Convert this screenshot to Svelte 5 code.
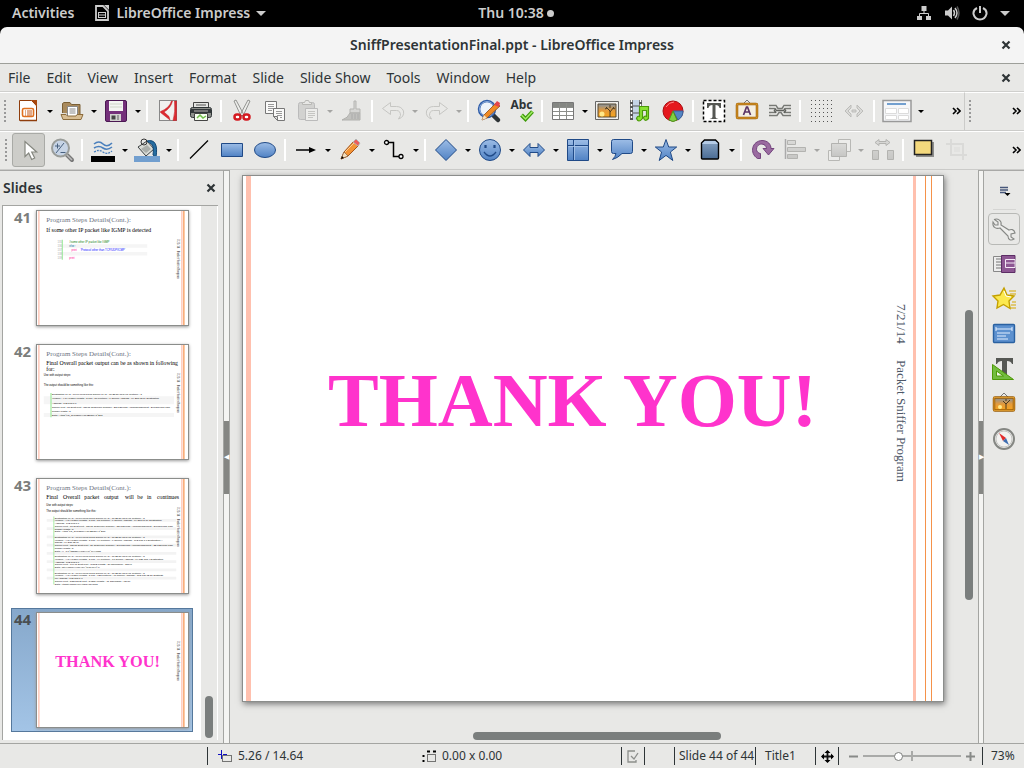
<script>
  const blue = 'fill="url(#blue)" stroke="#204a87"';
  const grey = 'fill="url(#silver)" stroke="#b3b3b0"';

  const art = {
    new: '<path d="M3.500 1.500h12l5 5v15h-17z" fill="#fff" stroke="#8f3d0c"/><path d="M15 1h6v7z" fill="#a8480f"/><rect x="6.500" y="9.500" width="11" height="8" rx="1.500" fill="#fff" stroke="#e07020" stroke-width="1.600"/><path d="M9 12h1m1 0h5M9 14h1m1 0h5M9 16h1m1 0h5" stroke="#c2571a"/><path d="M4 21.500h17" stroke="#8f3d0c" stroke-width="1.500"/>',
    open: '<path d="M2.500 14V4.500l1.500-1h6l1.500 2h8.500V15" fill="#a98a5c" stroke="#7a5f35"/><path d="M7.500 7.500h10v10h-10z" fill="#fff" stroke="#888"/><path d="M9.500 10h6m-6 2h6m-6 2h6" stroke="#888"/><path d="M1 15.500h5l1.500 1.500h8.500l1-1.500h6l-2 5H3z" fill="#d8bd92" stroke="#8c6c3c"/>',
    save: '<rect x="1.500" y="1.500" width="21" height="21" rx="1.500" fill="#74307a" stroke="#4a1852"/><path d="M5 2h14v10H5z" fill="#f4f5f2"/><path d="M6 5h12M6 8h12" stroke="#cfd6c8"/><path d="M6 15h11v7H6z" fill="#d2d2cf"/><path d="M7.500 16.500h4v4h-4z" fill="#444"/><path d="M13 16h2v5h-2z" fill="#999"/>',
    pdf: '<rect x="3.500" y="1.500" width="17" height="20" fill="#f1f1ef" stroke="#888"/><path d="M18.500 2h2v19.500h-3.500q2.500-8 1.500-19.500zM15.500 2q-2 7-11 10.500v1L14 21l-1-3.500L8 13q7-4 8.500-11z" fill="#dd2a30" stroke="#c01b21" stroke-width=".5"/>',
    print: '<path d="M4.500 3.500h15v6h-15z" fill="#e4e5e2" stroke="#444"/><path d="M7 6h10" stroke="#555"/><rect x="1.500" y="8.500" width="21" height="10" rx="2" fill="#8d8f8b" stroke="#2e3436"/><path d="M2 10h20v4H2z" fill="#33383a"/><path d="M5 11h14v2H5z" fill="#777"/><path d="M5.500 14.500h13v7h-13z" fill="#f8fff2" stroke="#444"/><path d="m8 19 3-3 3 3 3-2" fill="none" stroke="#71be4b" stroke-width="1.500"/>',
    cut: '<path d="m4 2 2-1 8 15-3 1zM20 2l-2-1-8 15 3 1z" fill="#ededeb" stroke="#7b7e7a" stroke-width=".8"/><rect x="4.500" y="15.500" width="6" height="5" rx="2.500" fill="#fff" stroke="#d41920" stroke-width="2.500"/><rect x="13.500" y="15.500" width="6" height="5" rx="2.500" fill="#fff" stroke="#d41920" stroke-width="2.500"/>',
    copy: '<path d="M2.500 2.500h11v12h-11z" fill="#fafaf9" stroke="#777"/><path d="M5 5.500h6m-6 2h6m-6 2h6m-6 2h4" stroke="#999"/><path d="M10.500 9.500h11v12h-7l-4-4z" fill="#fafaf9" stroke="#777"/><path d="M13 12.500h6m-6 2h6m-5 2h5m-2 2h2" stroke="#999"/><path d="M10.500 17.500h4v4z" fill="#ddd" stroke="#777"/>',
    paste: '<rect x="2.500" y="3.500" width="16" height="17" rx="2" fill="#d2d2d0" stroke="#bbb"/><path d="M6.500 5.500v-2h2l1-2h3l1 2h2v2z" fill="#e7e7e5" stroke="#b8b8b5"/><path d="M9.500 9.500h12v12h-12z" fill="#ededeb" stroke="#bbb"/><path d="M12 12.500h7m-7 2h7m-7 2h7m-7 2h5" stroke="#c5c5c2"/>',
    brush: '<path d="M14 2h2v8h4v4H10v-4h4z" fill="#d6d6d4" stroke="#b5b5b2"/><path d="M10 14h10v7H2q6-2 8-7z" fill="#c1c1be" stroke="#b0b0ad"/><path d="M12 15v5m3-5v5m3-5v5" stroke="#aaa"/>',
    undo: '<path d="M9.500 3.500 1.500 9.500l8 6v-4h6q4 0 4 5l-2 3.500q6-2 5-8-2-4.500-7-4.500h-6z" fill="#e9e9e7" stroke="#c6c6c3"/>',
    redo: '<path d="m14.500 3.500 8 6-8 6v-4h-6q-4 0-4 5l2 3.500q-6-2-5-8 2-4.500 7-4.500h6z" fill="#e9e9e7" stroke="#c6c6c3"/>',
    find: '<path d="m15 15 6 6" stroke="#2e3436" stroke-width="4.500" stroke-linecap="round"/><circle cx="10" cy="10" r="8" fill="#eef3fa" stroke="#2f5ca8" stroke-width="2.500"/><circle cx="10" cy="10" r="7.500" fill="none" stroke="#8caddc"/><path d="m5 21 2-5L19 4l4 3L10 19z" fill="#f08a24" stroke="#8a4a16" stroke-width=".8"/><path d="m17 6 3-4 3 2-1 4z" fill="#e5454b"/><path d="m5 21 2-5 3 3z" fill="#f4dfbf"/>',
    spell: '<path d="m11.500 16 4 4 7-7.500" fill="none" stroke="#3f9b0b" stroke-width="4"/><path d="m11.500 16 4 4 7-7.500" fill="none" stroke="#a3ec66" stroke-width="1.500"/>',
    table: '<path d="M1.500 3.500h21v17h-21z" fill="#fff" stroke="#777"/><path d="M2 4h20v4H2z" fill="#858783"/><path d="M2 8.500h20M2 12.500h20M2 16.500h20M8.500 4v16M15.500 4v16" stroke="#8c8e8a"/>',
    image: '<path d="M.5 2.500h23v18H.5z" fill="#eeeeec" stroke="#666"/><path d="M3 5h18v13H3z" fill="url(#sunset)" stroke="#5b4a30"/><circle cx="7" cy="15" r="2.500" fill="#ffe98a"/><path d="M15 18v-6l-4-4m4 5 4-5m-4 1V6m-3 3-2 1m8-1 2 1" fill="none" stroke="#4a3a20"/>',
    media: '<path d="M2 1h12v20H2z" fill="#c5d4e6"/><path d="M3.500 1v20m9-20v20" stroke="#555" stroke-width="3"/><path d="M3.500 1v20m9-20v20" stroke="#fff" stroke-width="1.500" stroke-dasharray="2 2"/><path d="M5 7h6m-6 7h6" stroke="#555"/><path d="M11.500 7.500h9v12q-4 4-5-1 1-2 3-1v-6h-4v8q-4 5-6 0 1-3 3-2z" fill="#8ae234" stroke="#4c9a0a" stroke-width="1.200"/>',
    chart: '<circle cx="12" cy="12" r="10" fill="#e5181d" stroke="#a90d11"/><path d="M12 12h10q0 6-5 9z" fill="#5586c4" stroke="#32629f"/><path d="m12 12 4 9q-4 3-8 0z" fill="#80ce43" stroke="#4e941f"/><path d="M5 8q3-5 8-5" fill="none" stroke="#ff8888"/>',
    textbox: '<path d="M1.500 1.500h21v21h-21z" fill="#fff" stroke="#000" stroke-width="1.500" stroke-dasharray="3 2"/><path d="M5 4h14v5h-1.500q-.5-3-4-3v12q0 1.500 3 2H7.500q3-.5 3-2V6q-3.500 0-4 3H5z" fill="#555753"/>',
    fontwork: '<path d="m8 5 4-4 4 4" fill="none" stroke="#777"/><rect x="2" y="5" width="20" height="14" rx="1" fill="#f4eee2" stroke="#9a5c05" stroke-width="2.500"/><rect x="2" y="5" width="20" height="14" fill="none" stroke="#eaa838" stroke-width=".9"/><path d="m8.500 16 3-8h1l3 8m-6-3h5" fill="none" stroke="#5c3566" stroke-width="1.700"/>',
    link: '<path d="M1 6.500h7l2 3h4l2-3h7M1 16.500h8l2-3h2l2 3h8M1 9.500h6M17 9.500h6M1 13.500h6M17 13.500h6" fill="none" stroke="#777975" stroke-width="1.400"/><path d="M8 9.500 6.500 11.500 8 14m8-4.500 1.500 2L16 14M8 11.500h8" fill="none" stroke="#60625e" stroke-width="1.600"/><path d="M3 8h5m8 0h5M3 15h5m8 0h5" stroke="#dededb"/>',
    grid: '<path d="M2 1.500h21M2 5.500h21M2 9.500h21M2 13.500h21M2 17.500h21M2 22.500h21" stroke="#555" stroke-dasharray="1 3"/>',
    glue: '<path d="m9 6-6 6 6 6v-3l-3-3 3-3zM15 6l6 6-6 6v-3l3-3-3-3zM10 11h4v2h-4z" fill="#d9d9d7" stroke="#bcbcb9"/>',
    lines: '<path d="M3 6q5-4 9 0t9-1M3 10q5-3 9 0t9-1" fill="none" stroke="#4b80bd" stroke-width="1.600"/><path d="M3 14q5-3 9 0t9-1" fill="none" stroke="#4b80bd" stroke-width="1.300" stroke-dasharray="2 1"/><path d="M0 18h24v6H0z"/>',
    fill: '<path d="M3 9 12 3l7 8-8 7z" fill="#d9dbd6" stroke="#3c4143"/><path d="m6 11 6-4 4 4-5 4z" fill="#aaaeaa"/><path d="M12 3c8-2 11 4 9 16l-3-2c1-8 0-11-5-13z" fill="#266da1" stroke="#124674"/><circle cx="9" cy="4" r="3" fill="none" stroke="#333"/><path d="M-1 18h26v6H-1z" fill="#729fcf"/>',
    pointer: '<path d="M8 3.500v15l3.700-3.500 3 6.500 3-1.500-3-6h5z" fill="#fff" stroke="#85877f" stroke-width="1.200"/>',
    zoom: '<path d="m17 17 5 5" stroke="#777" stroke-width="4" stroke-linecap="round"/><path d="m16 16 6 6" stroke="#bbb" stroke-width="1.500"/><circle cx="10.500" cy="10" r="8.500" fill="#c7d4e5" stroke="#9a9d9a" stroke-width="2"/><path d="M5 8h5M7.500 5.500v5m3 4h5M14 5l-8 10" stroke="#48617f" stroke-width="1"/>',
    line: '<path d="M3 20.500 21 2.500" stroke="#000" stroke-width="1.300"/>',
    rect: `<path d="M1.500 5.500h21v13h-21z" ${blue}/>`,
    ellipse: `<ellipse cx="12" cy="12" rx="10.500" ry="7.500" ${blue}/>`,
    arrow: '<path d="M2 12h14" stroke="#000" stroke-width="1.500"/><path d="m15 9 7 3-7 3z"/>',
    pencil: '<path d="m3 21 3-7L16 3l5 4L10 18z" fill="#f39336" stroke="#a3541a"/><path d="M7 14 17 4" stroke="#ffd094"/><path d="m15 4 3-3 4 4-2 3z" fill="#ed5b5b" stroke="#b5b5b5"/><path d="m3 21 3-7 4 4z" fill="#f4dfbf" stroke="#7a5330" stroke-width=".6"/><path d="m3 21 1-3 2 2z"/>',
    connector: '<path d="M6 4.500h5.500v14H17" fill="none" stroke="#000" stroke-width="1.500"/><circle cx="4.500" cy="4.500" r="2" fill="#fff" stroke="#000" stroke-width="1.300"/><circle cx="19" cy="18.500" r="2" fill="#fff" stroke="#000" stroke-width="1.300"/>',
    diamond: `<path d="m12 1.500 10.500 10.500L12 22.500 1.500 12z" ${blue}/>`,
    smile: `<circle cx="12" cy="12" r="10.500" ${blue}/><path d="M7.500 7v3M16.500 7v3" stroke="#204a87" stroke-width="2.200"/><path d="M6 14q6 8 12 0" fill="none" stroke="#204a87" stroke-width="1.300"/>`,
    arrows: `<path d="M1.500 12 8 5.500v4h8v-4l6.500 6.500-6.500 6.500v-4H8v4z" ${blue}/>`,
    flow: `<path d="M1.500 1.500h21v21h-21z" ${blue}/><path d="M7.500 2v20M2 7.500h20" stroke="#204a87"/><path d="M8.500 3v19M2.500 8.500h19" stroke="#a9c7eb" stroke-width=".8"/>`,
    callout: `<path d="M3.500 1.500h17q2 0 2 2v10q0 2-2 2H12Q8 20 2.500 21.500q3-3 3.500-6H3.500q-2 0-2-2v-10q0-2 2-2z" ${blue}/>`,
    star: `<path d="m12 1.500 2.700 7.500h8L16.400 14l2.400 8.500L12 17.400 5.200 22.500 7.600 14 1.300 9h8z" ${blue}/>`,
    cube: '<path d="m3.500 5 3-3h11l3 3v15q0 1-1 1h-15q-1 0-1-1z" fill="url(#steel)" stroke="#000" stroke-width="1.400"/><path d="m4.500 5 2.500-2h10l2.500 2v1h-15z" fill="#b4cbe5"/>',
    rotate: '<path d="M7.500 20.500C-1 15 2 3 12 2.500c6 0 9 4 9 8h3L18.500 17 13 10.500h3.500c-.5-6-10-6-10 1 0 2 2 4 4 4v5z" fill="#9a6ba0" stroke="#6b3a76" stroke-width=".9"/>',
    align: `<path d="M2.500 1v20" stroke="#aaa" stroke-width="1.500"/><path d="M4.500 2.500h8v4h-8zM4.500 9.500h18v4h-18zM4.500 16.500h10v4h-10z" ${grey}/>`,
    arrange: `<path d="M11.500 1.500h12v12h-12zM1.500 12.500h11v10h-11z" fill="#ececea" stroke="#b8b8b5"/><path d="M4.500 5.500h15v13h-15z" ${grey}/>`,
    spread: `<path d="m4 4.500 4-3v2h7v-2l4 3-4 3v-2H8v2zM1.500 12.500h6v9h-6zM16.500 12.500h6v9h-6z" ${grey}/>`,
    shadow: '<path d="M4 4h18v15H4z" fill="#8e8e8b"/><path d="M2.500 2.500h17v14h-17z" fill="#f4d97d" stroke="#222" stroke-width="1.500"/>',
    crop: '<path d="M6 1v16h16M1 6h17v16" fill="none" stroke="#dadad8" stroke-width="2"/><path d="M9 9h6v5H9z" fill="#e2e2e0"/>',
    menu: '<path d="M8 8.500h8M8 11h8M8 13.500h6" stroke="#48587b" stroke-width="1.400"/><path d="M12.500 14h6l-3 3z"/>',
    wrench: '<path d="M2.500 2.500 6 5v3H3L1 5c-1 6 4 7 7 6l8 8c0 4 3 5 6 3l-3-2v-3l4-1c-1-4-4-4-6-3L9 8c1-4-3-7-7-5.500z" fill="#eeeeec" stroke="#868885" stroke-width="1.100"/>',
    transition: '<path d="M1.500 4.500h9v15h-9z" fill="#eee" stroke="#888"/><path d="M4 7h5m-5 3h5m-5 3h5m-5 3h5" stroke="#777"/><path d="M9.500 3.500H23v17H9.500z" fill="#8d5793" stroke="#5c2d65"/><path d="M13.500 7.500H23v8h-9.500zM14 11h9" fill="none" stroke="#f4e8f6"/>',
    effects: '<path d="M17 4h7m-6 3h6m-4 8h4m-5 3h5m-6 3h6" stroke="#d5a800"/><path d="m12 1 3 7 7 1-5 5 1 7.500-6.500-4L5 21l1-7-5-5 7-1z" fill="#fce94f" stroke="#c4a000" stroke-width="1.400"/><path d="m12 4 2 5 5 1" fill="none" stroke="#fff"/>',
    master: '<rect x="1.500" y="2.500" width="21" height="18" rx="1" fill="#5d91cf" stroke="#2a61a1" stroke-width="1.400"/><path d="M4 7h16M4 5v4m16-4v4M5 11h13M5 14h9m-9 3h11" stroke="#e4efff"/>',
    styles: '<path d="M4 1h17v6h-1q-1-3-5-3v13h-5V4Q6 4 5 7H4z" fill="#555753"/><path d="M.5 7.500v15h21z" fill="#73bd3f" stroke="#4e9a06"/><path d="M4.500 14v5h7z" fill="#edf7e5" stroke="#4e9a06"/>',
    gallery: '<path d="m8 5 4-4 4 4" fill="none" stroke="#777"/><rect x="2" y="5.500" width="20" height="13" rx="1" fill="url(#sunset)" stroke="#9a5c05" stroke-width="2.500"/><rect x="2" y="5.500" width="20" height="13" fill="none" stroke="#e5a437" stroke-width=".8"/><path d="M14 17v-5l-3-3m3 3 4-4m-4 1V7" fill="none" stroke="#4a3a20"/><circle cx="8" cy="15" r="2" fill="#ffe98a"/>',
    compass: '<circle cx="12" cy="12" r="10" fill="#f2f2f0" stroke="#858783" stroke-width="2"/><circle cx="12" cy="12" r="8" fill="none" stroke="#c5c5c2"/><path d="m7 6 7 5-3 3z" fill="#e32b2b"/><path d="m17 18-3-7-3 3z" fill="#3e6eb0"/>'
  };

  const b = (icon, label, drop = false, off = false) => ({ icon, label, drop, off });
  const groups1 = [
    [b('new', 'New', true), b('open', 'Open', true), b('save', 'Save', true)],
    [b('pdf', 'Export as PDF'), b('print', 'Print')],
    [b('cut', 'Cut'), b('copy', 'Copy'), b('paste', 'Paste', true, true), b('brush', 'Clone Formatting', false, true)],
    [b('undo', 'Undo', true, true), b('redo', 'Redo', true, true)],
    [b('find', 'Find & Replace'), b('spell', 'Spelling')],
    [b('table', 'Table', true), b('image', 'Image'), b('media', 'Audio or Video'), b('chart', 'Chart')],
    [b('textbox', 'Text Box'), b('fontwork', 'Fontwork'), b('link', 'Hyperlink')],
    [b('grid', 'Display Grid'), b('glue', 'Helplines', false, true)],
    [b('layout', 'Slide Layout', true)]
  ];
  const groups2 = [
    [b('pointer', 'Select'), b('zoom', 'Zoom & Pan')],
    [b('lines', 'Line Color', true), b('fill', 'Fill Color', true)],
    [b('line', 'Line'), b('rect', 'Rectangle'), b('ellipse', 'Ellipse')],
    [b('arrow', 'Lines and Arrows', true), b('pencil', 'Curve', true), b('connector', 'Connector', true)],
    [b('diamond', 'Basic Shapes', true), b('smile', 'Symbol Shapes', true), b('arrows', 'Block Arrows', true), b('flow', 'Flowchart', true), b('callout', 'Callouts', true), b('star', 'Stars', true), b('cube', '3D Objects', true)],
    [b('rotate', 'Rotate'), b('align', 'Align', true, true), b('arrange', 'Arrange', true, true), b('spread', 'Distribute', false, true)],
    [b('shadow', 'Shadow'), b('crop', 'Crop', false, true)]
  ];
  const deck = [b('wrench', 'Properties'), b('transition', 'Slide Transition'), b('effects', 'Custom Animation'), b('master', 'Master Pages'), b('styles', 'Styles'), b('gallery', 'Gallery'), b('compass', 'Navigator')];
  const menus = ['File', 'Edit', 'View', 'Insert', 'Format', 'Slide', 'Slide Show', 'Tools', 'Window', 'Help'];

  const code42 = [
    'Destination MAC : 00:1c:c0:f3:73:aa Source MAC : 00:25:5e:1a:34:f1 Protocol : 8',
    'Version : 4 IP Header Length : 5 TTL : 57 Protocol : 6 Source Address : 64.233.72.19 Destination',
    'Address : 192.168.1.6',
    'Source Port : 80 Dest Port : 38918 Sequence Number : 2241219087 Acknowledgement : 2916819311 TCP',
    'header length : 8',
    'Data : YtjTh^eC_gHUghUHYRHB5G7Y7^E17'
  ];
  const block = (a, c, d, e) => [
    'Destination MAC : 00:1c:c0:f3:73:aa Source MAC : 00:25:5e:1a:34:f1 Protocol : 8', a, c, d, ...e
  ];
  const code43 = [
    ...block('Version : 4 IP Header Length : 5 TTL : 57 Protocol : 6 Source Address : 64.233.70.19 Destination', 'Address : 192.168.1.6', 'Source Port : 80 Dest Port : 38918 Sequence Number : 2241219087 Acknowledgement : 2916819311 TCP', ['header length : 8', 'Data : YtjTh^eC_gHUghUHYRHB5G7Y7^E17', '']),
    ...block('Version : 4 IP Header Length : 5 TTL : 64 Protocol : 6 Source Address : 192.168.1.6 Destination A', 'ddress : 64.233.72.19', 'Source Port : 38918 Dest Port : 80 Sequence Number : 2916819311 Acknowledgement : 2241219087 TCP', ['header length : 5', 'Data : H~TYt^tjghggHYUGHYU^THYUhG', '']),
    ...block('Version : 4 IP Header Length : 5 TTL : 64 Protocol : 17 Source Address : 74.125.175.4 Destination', ' Address : 192.168.1.6', 'Source Port : 34948 Dest Port : 34502 Length : 20 Checksum : 12746', ['Data : gtHYUbcTHYuUYTH^TygHUYt^%', '']),
    ...block('Version : 4 IP Header Length : 5 TTL : 128 Protocol : 17 Source Address : 172.168.12.51 Destinati', 'on Address : 192.168.1.6', 'Source Port : 5353 Dest Port : 54287 Length : 45 Checksum : 12479', ['Data : xtGhtYUhGTYUvYtGhYTgYhUg'])
  ];
  const spread43 = [[37, 'Final'], [104, 'Overall'], [189, 'packet'], [268, 'output'], [352, 'will'], [401, 'be'], [440, 'in'], [480, 'continues']];
  const slides = [41, 42, 43, 44];
  let current = $state(44);
  let zoom = $state(35);
</script>

{#snippet icon(name)}
  {#if name === 'layout'}
    <svg width="30" height="24" viewBox="0 0 30 24" aria-hidden="true">
      <path d="M1 1.500h28v21H1z" fill="#f5f6f8" stroke="#999" stroke-width="1.500" />
      <path d="M5 5h19" stroke="#729fcf" stroke-width="2" />
      <path d="M3.500 9.500h11v5h-11zM16.500 9.500h10v5h-10zM3.500 16.500h11v4h-11zM16.500 16.500h10v4h-10z" fill="#fff" stroke="#dcdcdc" />
    </svg>
  {:else}
    <svg width="24" height="24" viewBox="0 0 24 24" overflow="visible" aria-hidden="true">{@html art[name]}</svg>
  {/if}
{/snippet}

{#snippet toolgroups(groups)}
  {#each groups as group, i}
    {#if i > 0}<span class="sep"></span>{/if}
    {#each group as t}
      <button class="tool" class:pressed={t.icon === 'pointer'} class:broad={t.icon === 'layout'} aria-label={t.label} disabled={t.off}>
        {#if t.icon === 'spell'}<span class="abc">Abc</span>{/if}
        {@render icon(t.icon)}
      </button>
      {#if t.drop}<button class="drop" aria-label="{t.label} options" disabled={t.off}></button>{/if}
    {/each}
  {/each}
{/snippet}

{#snippet cross()}
  <svg width="10" height="10" viewBox="0 0 10 10" aria-hidden="true"><path d="m1.500 1.500 7 7m0-7-7 7" stroke="#2e3436" stroke-width="2.200" /></svg>
{/snippet}

{#snippet more(label)}
  <button class="more" aria-label={label}><svg width="9" height="8" viewBox="0 0 9 8" aria-hidden="true"><path d="m1 1 3 3-3 3m4-6 3 3-3 3" fill="none" stroke="#000" stroke-width="1.600" /></svg></button>
{/snippet}

{#snippet mini(n)}
  <svg class="mini" viewBox="0 0 604 456" aria-hidden="true">
    <path d="M5 0h5v456H5zM577 0h5v456h-5z" fill="#ffc0ae" />
    <path d="M585 0h5v456h-5z" fill="#f79550" />
    <g transform="translate(559 0) rotate(90)" font-size="12" fill="#222"><text x="112" y="0">7/21/14</text><text x="159" y="0">Packet Sniffer Program</text></g>
    {#if n < 44}<text x="37" y="45" font-size="28" fill="#6b7280">Program Steps Details(Cont.):</text>{/if}
    {#if n === 41}
      <text x="37" y="83" font-size="23">If some other IP packet like IGMP is detected</text>
      <path d="M101 133h340v14H101zM101 164h340v14H101z" fill="#f5f5f5" />
      <path d="M99 115h4v80h-4z" fill="#8ee88e" />
      <g font-size="11" class="sans">
        {#each [135, 136, 137, 138, 139] as k, i}<text x="82" y={128 + i * 16} fill="#aaa">{k}</text>{/each}
        <text x="129" y="128" fill="#108010">#some other IP packet like IGMP</text>
        <text x="129" y="144" fill="#006699">else :</text>
        <text x="138" y="160" fill="#ff1493">print</text>
        <text x="174" y="160" fill="#1010ff">'Protocol other than TCP/UDP/ICMP'</text>
        <text x="129" y="192" fill="#ff1493">print</text>
      </g>
    {:else if n === 42}
      <text x="37" y="80" font-size="23">Final Overall packet output can be as shown in following</text>
      <text x="37" y="104" font-size="23">for:</text>
      <g class="sans" font-size="11"><text x="27" y="124">Use with output steps:</text><text x="27" y="163">The output should be something like this:</text></g>
      <path d="M27 205h521v32H27zM27 272h521v16H27z" fill="#f5f5f5" />
      <path d="M54 192h4v97h-4z" fill="#8ee88e" />
      <g font-size="10" class="sans">{#each code42 as l, i}<text x="60" y={200 + i * 17}>{l}</text>{/each}</g>
    {:else if n === 43}
      {#each spread43 as [x, w]}<text {x} y="80" font-size="23">{w}</text>{/each}
      <g class="sans" font-size="11"><text x="37" y="107">Use with output steps:</text><text x="37" y="133">The output should be something like this:</text></g>
      {#each code43 as l, i}
        {#if i % 3 === 1}<path d="M39 {149 + i * 11}h518v11H39z" fill="#f3f3f3" />{/if}
      {/each}
      <path d="M66 150h3v272h-3z" fill="#8ee88e" />
      <g font-size="10" class="sans">{#each code43 as l, i}<text x="71" y={158 + i * 11}>{l}</text>{/each}</g>
    {:else if n === 44}
      <text x="73" y="215" font-size="65" font-weight="700" fill="#ff33cc">THANK YOU!</text>
    {/if}
  </svg>
{/snippet}

<svg class="defs" width="0" height="0" aria-hidden="true">
  <defs>
    <linearGradient id="blue" x2="0" y2="1"><stop stop-color="#9dbde6" /><stop offset="1" stop-color="#5082c4" /></linearGradient>
    <linearGradient id="steel" x2="0" y2="1"><stop stop-color="#8aa5c4" /><stop offset="1" stop-color="#4a6c94" /></linearGradient>
    <linearGradient id="silver" x2="0" y2="1"><stop stop-color="#dadad8" /><stop offset="1" stop-color="#c6c6c4" /></linearGradient>
    <linearGradient id="sunset" x2="0" y2="1"><stop stop-color="#8291a1" /><stop offset=".5" stop-color="#e49a3a" /><stop offset="1" stop-color="#f7a51c" /></linearGradient>
  </defs>
</svg>

<div class="screen">
  <header class="topbar">
    <div class="left">
      <button class="shell">Activities</button>
      <button class="shell app">
        <svg width="16" height="18" viewBox="0 0 16 18" aria-hidden="true"><path d="M2 2h7l5 5v9H2z" fill="none" stroke="#ccc" stroke-width="1.800" /><path d="M10 1h5v5z" fill="#ccc" /><rect x="4.500" y="8.500" width="7" height="5" fill="none" stroke="#ccc" /><path d="M5 11h6" stroke="#ccc" /></svg>
        LibreOffice Impress <i class="caret"></i>
      </button>
    </div>
    <button class="shell clock">Thu 10:38<i class="dot"></i></button>
    <div class="tray">
      <svg width="16" height="16" viewBox="0 0 16 16" aria-hidden="true"><path d="M5.500 1h5v5h-5zM1 11h5v4H1zM10 11h5v4h-5z" fill="#ccc" /><path d="M8 5v4M3.500 11V8.500h9V11" fill="none" stroke="#ccc" /></svg>
      <svg width="16" height="16" viewBox="0 0 16 16" aria-hidden="true"><path d="M1 5.500h3l4-4v13l-4-4H1z" fill="#ccc" /><path d="M9.500 5q2 3 0 6M11 3q4 5 0 10" fill="none" stroke="#ccc" stroke-width="1.500" /><path d="M13 1.500q4 6.500 0 13" fill="none" stroke="#555" stroke-width="1.500" /></svg>
      <svg width="16" height="16" viewBox="0 0 16 16" aria-hidden="true"><path d="M8 1v7M5 3q-4 2-3.500 6Q3 14.500 8 14.500T14.500 9Q15 5 11 3" fill="none" stroke="#ccc" stroke-width="2" /></svg>
      <i class="caret"></i>
    </div>
  </header>

  <div class="titlebar"><h1>SniffPresentationFinal.ppt - LibreOffice Impress</h1><button class="close" aria-label="Close window">{@render cross()}</button></div>

  <nav class="menubar">
    {#each menus as m}<button>{m}</button>{/each}
    <button class="close" aria-label="Close document">{@render cross()}</button>
  </nav>

  <div class="bars">
    <div class="toolbar"><span class="grip"></span>{@render toolgroups(groups1)}{@render more('More controls')}</div>
    <div class="toolbar stub"><span class="grip"></span>{@render more('More presentation controls')}</div>
  </div>
  <div class="toolbar second"><span class="grip"></span>{@render toolgroups(groups2)}{@render more('More drawing controls')}</div>

  <main>
    <aside class="slides">
      <div class="head"><h2>Slides</h2><button class="close" aria-label="Close slide pane">{@render cross()}</button></div>
      <div class="frame">
        <div class="list">
          {#each slides as n}
            <button class="item" class:active={n === current} onclick={() => (current = n)}><span>{n}</span>{@render mini(n)}</button>
          {/each}
        </div>
        <div class="track side"><i></i></div>
      </div>
    </aside>
    <div class="split"><button aria-label="Hide slide pane">◀</button></div>

    <section class="editor">
      <article class="slide">
        <i class="band first"></i>
        <h3>THANK YOU!</h3>
        <p><span>7/21/14</span><span>Packet Sniffer Program</span></p>
        <i class="band last"></i><i class="thin"></i><i class="thin"></i>
      </article>
      <div class="track vert"><i></i></div>
      <div class="track horiz"><i></i></div>
    </section>

    <div class="split"><button aria-label="Hide sidebar">▶</button></div>
    <aside class="deck">
      <button class="cfg" aria-label="Sidebar settings">{@render icon('menu')}</button>
      {#each deck as d, i}<button class:on={i === 0} aria-label={d.label}>{@render icon(d.icon)}</button>{/each}
    </aside>
  </main>

  <footer>
    <span></span>
    <div class="pos">
      <span><svg width="15" height="13" viewBox="0 0 15 13" aria-hidden="true"><path d="M3.500 0v9M0 4.500h9" stroke="#1010c0" stroke-dasharray="4 1" /><path d="M4.500 5.500h9v6h-9z" fill="none" stroke="#000" stroke-dasharray="1 1" /></svg>5.26 / 14.64</span>
      <span><svg width="15" height="13" viewBox="0 0 15 13" aria-hidden="true"><path d="M5.500 4.500h8v7h-8z" fill="none" stroke="#000" stroke-dasharray="1 1" /><path d="M5 1.500h3m3 0h3M1.500 5v2m0 3v2" stroke="#000" stroke-width="2" /></svg>0.00 x 0.00</span>
    </div>
    <span class="cell mid"><svg width="12" height="13" viewBox="0 0 12 13" aria-hidden="true"><path d="M8 1H1v11h8v-2M4 6l3 3 4-6" fill="none" stroke="#8c8e8b" stroke-width="1.300" /></svg></span>
    <span class="cell"></span>
    <span class="cell">Slide 44 of 44</span>
    <span class="cell wide-pad">Title1</span>
    <span class="cell mid"><svg width="13" height="13" viewBox="0 0 13 13" aria-hidden="true"><path d="M6.500 1v11M1 6.500h11" stroke="#111" stroke-width="1.800" /><path d="m6.500 0 3 3h-6zM6.500 13l3-3h-6zM0 6.500l3-3v6zM13 6.500l-3-3v6z" /></svg></span>
    <div class="cell zoomer">
      <button aria-label="Zoom out"><svg width="9" height="9" viewBox="0 0 9 9" aria-hidden="true"><path d="M0 4.500h9" stroke="#888a88" stroke-width="2" /></svg></button>
      <input type="range" min="0" max="100" bind:value={zoom} aria-label="Zoom" />
      <button aria-label="Zoom in"><svg width="9" height="9" viewBox="0 0 9 9" aria-hidden="true"><path d="M0 4.500h9M4.500 0v9" stroke="#888a88" stroke-width="2" /></svg></button>
    </div>
    <span class="cell pct">73%</span>
  </footer>
</div>

<style>
  :global(body) { margin: 0; background: #000; }
  * { box-sizing: border-box; }
  button { border: 0; padding: 0; margin: 0; background: none; color: inherit; font: inherit; display: flex; align-items: center; justify-content: center; }
  h1, h2, h3, p { margin: 0; }
  svg { display: block; flex: none; }
  .defs { position: absolute; }
  .screen { display: flex; flex-direction: column; min-height: 100vh; font: 14px/20px "Noto Sans", "Open Sans", sans-serif; color: #2e3436; background: #000; }

  .topbar { display: grid; grid-template-columns: 1fr auto 1fr; align-items: center; height: 27px; padding: 0 14px 1px 12px; background: #000; color: #ccc; font-weight: 600; }
  .left, .app, .tray { display: flex; align-items: center; }
  .left { gap: 20px; }
  .app { gap: 6px; }
  .clock { gap: 3px; padding-left: 10px; }
  .tray { justify-content: flex-end; gap: 12px; }
  .caret { width: 0; border: 5px solid transparent; border-top-color: #ccc; border-bottom: 0; }
  .dot { width: 7px; height: 7px; border-radius: 50%; background: #ccc; }

  .titlebar { display: flex; align-items: center; height: 37px; padding: 0 13px 1px 23px; background: #f4f4f4; border-bottom: 1px solid #9d9f9a; border-radius: 7px 7px 0 0; }
  h1 { flex: 1; text-align: center; font-size: 14px; font-weight: 600; line-height: 20px; }
  .close { width: 10px; height: 10px; }
  .menubar { display: flex; align-items: center; gap: 16px; height: 28px; padding: 0 13px 0 8px; background: #e8e8e6; border-bottom: 1px solid #cfcfcd; }
  .menubar .close { margin-left: auto; }

  .bars { display: flex; }
  .toolbar { display: flex; align-items: center; flex: 1; height: 39px; padding: 0 3px 1px 4px; background: #e8e8e6; border-top: 1px solid #fff; border-bottom: 1px solid #cbcbc9; }
  .second { flex: none; padding-left: 5px; }
  .stub { flex: none; width: 60px; border-left: 1px solid #cbcbc9; }
  .grip { width: 2px; height: 22px; margin-right: 5px; background: repeating-linear-gradient(#999 0 2px, transparent 2px 4px); }
  .sep { width: 2px; height: 22px; margin: 0 3px; background: #fff; }
  .tool { position: relative; width: 33px; height: 34px; }
  .broad { width: 37px; }
  .pressed { border: 1px solid #a9aaa6; border-radius: 3px; background: #cdcdc9; }
  .abc { position: absolute; top: 3px; left: 0; width: 100%; text-align: center; font-size: 12px; line-height: 16px; font-weight: 700; }
  .drop { width: 11px; height: 34px; }
  .drop::after { content: ""; border: 3px solid transparent; border-top-color: #000; border-bottom: 0; }
  .drop:disabled::after { border-top-color: #a5a5a3; }
  .more { margin-left: auto; }

  main { display: grid; grid-template-columns: 223px 7px minmax(0, 1fr) 6px 40px; flex: 1; background: #e8e8e6; border-bottom: 1px solid #a4a5a2; }
  .slides { display: flex; flex-direction: column; border-top: 1px solid #a9a9a7; padding-bottom: 3px; }
  .head { display: flex; align-items: center; justify-content: space-between; height: 34px; padding: 0 7px 0 3px; }
  h2 { font-size: 14px; font-weight: 600; line-height: 20px; }
  .frame { display: flex; flex: 1; margin: 0 5px 0 2px; border: 1px solid #a4a5a2; border-width: 1px 0 0 1px; }
  .list { display: flex; flex: 1; flex-direction: column; gap: 10px; padding: 2px 8px 0; background: #fff; }
  .item { align-items: flex-start; justify-content: space-between; height: 124px; padding: 4px 4px 0 3px; color: #7b7d7b; font-size: 15px; font-weight: 700; line-height: 14px; }
  .active { padding: 3px 3px 0 2px; background: linear-gradient(#86a8cb, #a3c4e6); border: 1px solid #55789c; color: #4a4f52; }
  .mini { width: 153px; height: 116px; margin-top: -2px; background: #fff; border: 1px solid #8b8d8b; box-shadow: 0 1px 3px #999; font-family: "Liberation Serif", serif; font-weight: 400; }
  .mini .sans { font-family: "Liberation Sans", sans-serif; }
  .track { display: flex; }
  .track i { border-radius: 4px; background: #7a7e7d; }
  .side { flex-direction: column; justify-content: flex-end; width: 17px; padding: 0 5px 2px 4px; border-right: 1px solid #fff; }
  .side i { width: 8px; height: 42px; }
  .list { padding-top: 1px; }
  .mini { margin-top: 0; }
  .frame .list { padding-top: 0; }

  .split { display: flex; align-items: center; border: 1px solid #a4a5a2; border-width: 1px 1px 0 1px; background: #f4f4f2; }
  .split button { width: 100%; height: 73px; background: #858683; color: #fff; font-size: 7px; line-height: 8px; }

  .editor { display: grid; grid-template-columns: minmax(0, 1fr) 8px; grid-template-rows: auto 8px; align-content: space-between; column-gap: 21px; padding: 5px 5px 3px 12px; }
  .slide { display: flex; aspect-ratio: 4 / 3; padding: 0 11px 0 3px; background: #fff; border: 1px solid #8b8d8b; box-shadow: 1px 2px 6px #777; }
  .band { width: 5px; background: #ffc0ae; }
  .last { width: 3px; margin: 0 9px 0 5px; }
  .thin { width: 1px; margin-right: 5px; background: #f5924a; }
  .thin:last-child { margin-right: 0; }
  h3 { display: grid; flex: 1; place-items: center; padding-bottom: 76px; font: 700 76px/76px "Liberation Serif", serif; color: #ff33cc; white-space: nowrap; }
  .slide p { display: flex; gap: 16px; width: 14px; padding-top: 128px; writing-mode: vertical-rl; font: 13px/14px "Liberation Serif", serif; color: #4d5666; white-space: nowrap; }
  .vert { flex-direction: column; padding: 135px 0 102px; }
  .vert i { flex: 1; }
  .horiz { grid-column: 1 / -1; padding: 0 252px 0 231px; }
  .horiz i { flex: 1; }

  .deck { display: flex; flex-direction: column; align-items: center; gap: 3px; padding: 5px 0 0; border-top: 1px solid #a9a9a7; }
  .deck button { width: 32px; height: 32px; border-radius: 4px; }
  .deck .cfg { height: 34px; border-bottom: 1px solid #d5d5d3; border-radius: 0; width: 23px; padding-bottom: 4px; }
  .deck .on { border: 1px solid #b8b9b6; }

  footer { display: grid; grid-template-columns: 207px minmax(0, 1fr) 23px 30px 81px 60px 23px 144px 42px; align-items: center; height: 24px; background: #e8e8e6; font-size: 12px; line-height: 18px; white-space: nowrap; }
  .pos { display: grid; grid-template-columns: 204px 1fr; border-left: 1px solid #2e3436; padding-left: 10px; }
  .pos span { display: flex; align-items: center; gap: 5px; }
  .cell { height: 18px; padding-left: 4px; border-left: 1px solid #2e3436; }
  .wide-pad { padding-left: 9px; }
  .pct { padding-left: 8px; }
  .mid { display: flex; align-items: center; justify-content: center; padding: 0; }
  .zoomer { display: flex; align-items: center; gap: 5px; padding: 0 7px 0 10px; }
  input { appearance: none; flex: 1; min-width: 0; height: 14px; margin: 0; background: linear-gradient(90deg, transparent 48px, #a9aaa8 48px 50px, transparent 50px) 0 2px / 100% 10px no-repeat, linear-gradient(#a9aaa8, #a9aaa8) 0 6px / 100% 2px no-repeat; }
  input::-webkit-slider-thumb { appearance: none; width: 9px; height: 9px; border: 1px solid #7d7f7d; border-radius: 50%; background: #fff; }
</style>
